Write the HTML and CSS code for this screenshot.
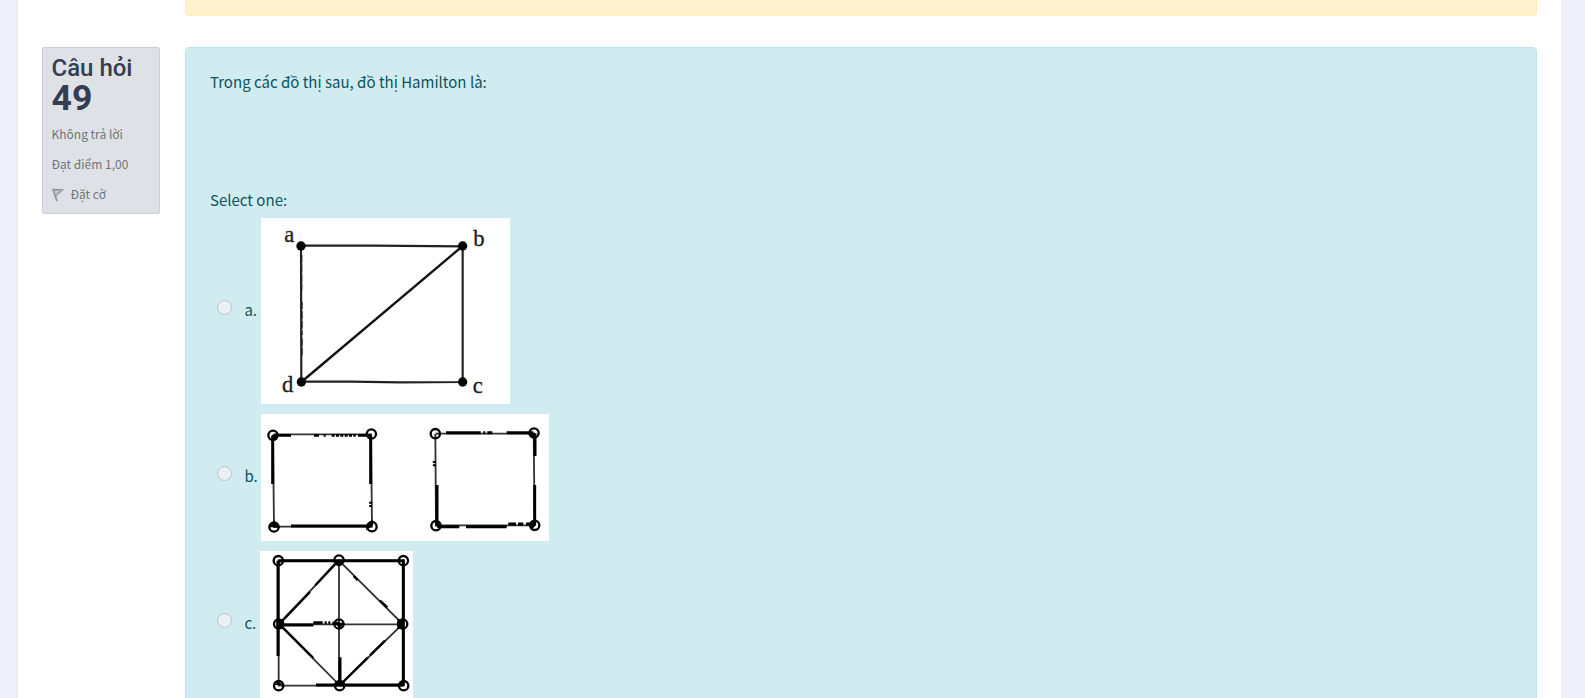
FILE: index.html
```html
<!DOCTYPE html>
<html lang="vi">
<head>
<meta charset="utf-8">
<title>Câu hỏi 49</title>
<link rel="stylesheet" href="styles.css">
</head>
<body>
<main class="page">
  <div class="feedback"></div>
  <section class="question">
    <aside class="info">
      <h3 class="info-title">Câu hỏi <span class="info-number">49</span></h3>
      <div class="info-line">Không trả lời</div>
      <div class="info-line">Đạt điểm 1,00</div>
      <div class="info-line flag">
        <svg class="flag-icon" viewBox="0 0 12 14"><path d="M.4 .9 4.6 13.4M.4 1.2 11.4 1.6 3.5 8.4M1.9 2.2 8.8 3 3.6 6M1.8 1.6 5.4 13" fill="none" stroke="#85898d" stroke-width=".9"/></svg>
        <span>Đặt cờ</span>
      </div>
    </aside>
    <div class="content">
      <p class="prompt">Trong các đồ thị sau, đồ thị Hamilton là:</p>
      <p class="select">Select one:</p>
      <div class="answer answer-a">
        <span class="radio"></span><span class="letter">a.</span>
        <svg class="figure" width="249" height="186" viewBox="183 24 747 558">
          <g fill="none" stroke="#222" stroke-width="6.5">
            <path d="M303 107H520L788 109V516L600 517L455 515H304L303 107"/>
            <path d="M304 516 788 108" stroke="#111" stroke-width="7"/>
          </g>
          <path d="M305 135V240M306 275V375M306 385V440" stroke="#222" stroke-width="4" stroke-dasharray="22 7"/>
          <g fill="#050505"><circle cx="303" cy="108" r="14"/><circle cx="788" cy="108" r="14"/><circle cx="304" cy="516" r="14"/><circle cx="788" cy="516" r="14"/></g>
          <g class="vertex"><text x="253" y="95">a</text><text x="820" y="109">b</text><text x="246" y="547">d</text><text x="818" y="549">c</text></g>
        </svg>
      </div>
      <div class="answer answer-b">
        <span class="radio"></span><span class="letter">b.</span>
        <svg class="figure" width="288" height="127" viewBox="183 27 864 381">
          <g fill="none" stroke="#333" stroke-width="5.5">
            <path d="M220 88H513L516 365H222L219 90"/>
            <path d="M707 86H1001L1004 361H708L706 86"/>
          </g>
          <g fill="none" stroke="#000" stroke-width="9">
            <path d="M222 91H273M342 91H357M371 91H377M474 91H512" stroke-width="8"/>
            <path d="M395 91H467" stroke-width="8" stroke-dasharray="9 4"/>
            <path d="M218 92V237M512 92V237M273 363H514"/>
            <path d="M738 83H842M850 83H856M862 83H877M920 83H1000M1005 85V153M711 240V362M1004 240V361M712 365H778M798 365H920M925 357H948M954 357H970M978 357H1002"/>
            <path d="M703 168V188M512 290V306" stroke-dasharray="6 4"/>
          </g>
          <g fill="none" stroke="#050505" stroke-width="7">
            <circle cx="219" cy="91" r="14"/><circle cx="514" cy="87" r="14"/><circle cx="222" cy="366" r="14"/><circle cx="516" cy="365" r="14"/>
            <circle cx="706" cy="86" r="14"/><circle cx="1002" cy="84" r="14"/><circle cx="708" cy="362" r="14"/><circle cx="1004" cy="361" r="14"/>
          </g>
          <path d="M219 91h15l-12 12zM514 91h-15l12 12zM222 366v-15l15 15zM222 351l-12 14 12 0zM516 360v-13l-15 13v12zM708 362v-13l13 15zM1002 85h-16l14 12zM1004 361v-13l-16 13 8 10z" stroke="#000" stroke-width="4"/>
        </svg>
      </div>
      <div class="answer answer-c">
        <span class="radio"></span><span class="letter">c.</span>
        <svg class="figure" width="153" height="147" viewBox="180 33 459 441">
          <g fill="none" stroke="#333" stroke-width="5.5">
            <path d="M235 62H610V437H236V62M417 62V437M236 253H608"/>
            <path d="M417 62 236 252 419 436 608 252Z"/>
          </g>
          <g fill="none" stroke="#000" stroke-width="9">
            <path d="M235 62H610V437M234 62V348M420 352V436M348 435H610"/>
            <path d="M238 255H340M340 248H368M374 248H380M385 248H391M397 250H417"/>
            <path d="M330 156 238 252M405 72 346 136M238 252 340 354M419 436 504 352M510 346 555 302M461 108 473 121M540 182 562 202" stroke-width="7"/>
          </g>
          <g fill="none" stroke="#050505" stroke-width="7">
            <circle cx="235" cy="62" r="14"/><circle cx="417" cy="60" r="14"/><circle cx="610" cy="62" r="14"/>
            <circle cx="236" cy="252" r="14"/><circle cx="417" cy="252" r="14"/><circle cx="608" cy="252" r="14"/>
            <circle cx="236" cy="437" r="14"/><circle cx="419" cy="437" r="14"/><circle cx="611" cy="437" r="14"/>
          </g>
          <path d="M229 238h23v29h-23zM592 238h20v29h-20zM403 60h28l-7 17h-14zM405 424h28v14h-28zM403 248h29l-12 18zM222 435h28l-15-10zM596 434h16v-14zM233 60h16l-12 12z"/>
        </svg>
      </div>
    </div>
  </section>
</main>
</body>
</html>
```
FILE: styles.css
```css
* { box-sizing: border-box; }
body {
  margin: 0;
  height: 698px;
  overflow: hidden;
  background: #edf0f9;
  font-family: "Noto Sans CJK SC", "Noto Sans", sans-serif;
  color: #0c5460;
}
.page {
  height: 698px;
  margin: 0 24px 0 18px;
  padding: 0 24px;
  background: #fff;
  overflow: hidden;
}
.feedback {
  height: 16px;
  margin-left: 143px;
  background: #fff2cf;
  border: 1px solid #ffeeba;
  border-top: 0;
  border-radius: 0 0 4px 4px;
}
.question {
  display: flex;
  align-items: flex-start;
  gap: 25px;
  margin-top: 31px;
}
.info {
  width: 118px;
  height: 167px;
  padding: 9px 8.5px 0;
  background: #dee2e6;
  border: 1px solid #cad0d7;
  border-radius: 2px;
  color: #6f7479;
}
.info-title {
  margin: 0 0 8px;
  font: 500 24px/23px Roboto, sans-serif;
  color: #343e50;
}
.info-number {
  display: block;
  font-size: 35.6px;
  font-weight: 700;
  line-height: 36px;
}
.info-line {
  height: 20px;
  margin-bottom: 10px;
  font-size: 12px;
  line-height: 20px;
  white-space: nowrap;
}
.flag { display: flex; align-items: center; gap: 7px; }
.flag-icon { width: 12px; height: 14px; margin-top: 2px; }
.content {
  width: 1352px;
  height: 720px;
  padding: 22px 24px;
  background: #d1ecf0;
  border: 1px solid #bee5eb;
  border-radius: 4px;
  font-size: 15.03px;
}
.prompt { margin: 0; height: 118px; line-height: 24px; }
.select { margin: 0; height: 30px; line-height: 24px; }
.answer { display: flex; align-items: center; padding-left: 7px; }
.answer-a { height: 186px; margin-bottom: 10px; }
.answer-b { height: 127px; margin-bottom: 10px; }
.answer-c { height: 147px; }
.radio {
  width: 15px;
  height: 15px;
  margin-top: -8px;
  border: 1px solid #bcc2c5;
  border-radius: 50%;
  background: #e9f1f4;
}
.letter { width: 17px; margin: -3px 0 0 12.4px; line-height: 24px; }
.answer-c .letter { width: 16px; }
.figure { display: block; margin-left: -0.4px; background: #fff; }
.vertex { font: 68px "Liberation Serif", serif; fill: #222; stroke: #222; stroke-width: 1; }
```
